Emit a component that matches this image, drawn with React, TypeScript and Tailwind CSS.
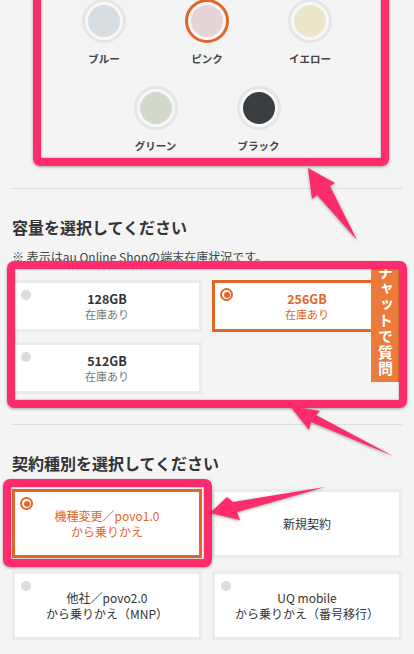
import React from "react";

const colorsRow1 = [
  { name: "ブルー", c: "bg-[#d8dde2]", sel: false },
  { name: "ピンク", c: "bg-[#e8d3d5]", sel: true },
  { name: "イエロー", c: "bg-[#ece6c9]", sel: false },
];
const colorsRow2 = [
  { name: "グリーン", c: "bg-[#d3dacb]", sel: false },
  { name: "ブラック", c: "bg-[#3b3e41]", sel: false },
];

function Swatch({ name, c, sel }: { name: string; c: string; sel: boolean }) {
  return (
    <div className="flex w-[103px] flex-col items-center">
      <div
        className={`h-[44px] w-[44px] rounded-full border-[3px] p-[3px] bg-[#f7f7f7] ${
          sel ? "border-[#e2652a]" : "border-[#e5e5e5]"
        }`}
      >
        <div className={`h-full w-full rounded-full ${c}`} />
      </div>
      <div className="mt-[9px] text-[10.5px] font-bold leading-[14px] text-[#444]">{name}</div>
    </div>
  );
}

function Radio({ sel }: { sel: boolean }) {
  return sel ? (
    <div className="absolute left-[5px] top-[5px] flex h-[13px] w-[13px] items-center justify-center rounded-full border-2 border-[#e2652a] bg-white">
      <div className="h-[6px] w-[6px] rounded-full bg-[#e2652a]" />
    </div>
  ) : (
    <div className="absolute left-[6px] top-[7px] h-[10px] w-[10px] rounded-full bg-[#dcdcdc]" />
  );
}

function CapCard({ gb, sel }: { gb: string; sel: boolean }) {
  return (
    <div
      className={`relative flex h-[52px] flex-col items-center justify-center border-[3px] bg-white ${
        sel ? "border-[#e2652a]" : "border-[#ebebeb]"
      }`}
    >
      <Radio sel={sel} />
      <div className={`text-[12.5px] font-semibold leading-[14px] ${sel ? "text-[#e2652a]" : "text-[#333]"}`}>{gb}</div>
      <div className={`mt-px text-[11px] leading-[14px] ${sel ? "text-[#e2652a]" : "text-[#777]"}`}>在庫あり</div>
    </div>
  );
}

function ContractCard({ lines, sel }: { lines: string[]; sel: boolean }) {
  return (
    <div
      className={`relative flex h-[69px] flex-col items-center justify-center border-[3px] bg-white ${
        sel ? "border-[#e2652a]" : "border-[#ebebeb]"
      }`}
    >
      <Radio sel={sel} />
      {lines.map((l) => (
        <div key={l} className={`text-[12px] font-normal leading-[16px] ${sel ? "text-[#e2652a]" : "text-[#333]"}`}>
          {l}
        </div>
      ))}
    </div>
  );
}

export default function App() {
  return (
    <div className="relative h-[654px] w-[414px] overflow-hidden bg-[#f4f4f4] font-['Noto_Sans_CJK_JP','Noto_Sans',sans-serif]">
      <div className="px-3">
        {/* colors */}
        <div className="-mt-px flex flex-col">
          <div className="flex justify-center">
            {colorsRow1.map((s) => (
              <Swatch key={s.name} {...s} />
            ))}
          </div>
          <div className="mt-[20px] flex justify-center">
            {colorsRow2.map((s) => (
              <Swatch key={s.name} {...s} />
            ))}
          </div>
        </div>
        <div className="mt-[35px] h-px bg-[#dddddd]" />

        <h2 className="mt-[26px] text-[16px] font-bold leading-[24px] text-[#333]">容量を選択してください</h2>
        <p className="mt-[9px] text-[12px] leading-[18px] text-[#444]">※&nbsp;表示はau Online Shopの端末在庫状況です。</p>
        <div className="mt-[14px] grid grid-cols-2 gap-[10px]">
          <CapCard gb="128GB" sel={false} />
          <CapCard gb="256GB" sel={true} />
          <CapCard gb="512GB" sel={false} />
        </div>
        <div className="mt-[30px] h-px bg-[#dddddd]" />

        <h2 className="mt-[26px] text-[16px] font-bold leading-[24px] text-[#333]">契約種別を選択してください</h2>
        <div className="mt-[14px] grid grid-cols-2 gap-x-[10px] gap-y-[13px]">
          <ContractCard lines={["機種変更／povo1.0", "から乗りかえ"]} sel={true} />
          <ContractCard lines={["新規契約"]} sel={false} />
          <ContractCard lines={["他社／povo2.0", "から乗りかえ（MNP）"]} sel={false} />
          <ContractCard lines={["UQ mobile", "から乗りかえ（番号移行）"]} sel={false} />
        </div>
      </div>

      {/* floating chat tab */}
      <div className="absolute left-[371px] top-[263px] flex h-[119px] w-[28px] justify-center bg-[#ec7b3b] pt-[2px]">
        <span className="text-[15px] font-bold leading-[28px] tracking-[1px] text-white [writing-mode:vertical-rl]">
          チャットで質問
        </span>
      </div>

      {/* annotation boxes */}
      <div className="absolute left-[33px] top-[-22px] h-[188px] w-[356px] rounded-[7px] border-[8px] border-[#fe2c6c] shadow-[0_1px_3px_rgba(0,0,0,0.35),inset_0_0_2px_rgba(0,0,0,0.45)]" />
      <div className="absolute left-[7px] top-[261px] h-[147px] w-[400px] rounded-[7px] border-[8px] border-[#fe2c6c] shadow-[0_1px_3px_rgba(0,0,0,0.35),inset_0_0_2px_rgba(0,0,0,0.45)]" />
      <div className="absolute left-[3px] top-[479px] h-[88px] w-[209px] rounded-[7px] border-[8px] border-[#fe2c6c] shadow-[0_1px_3px_rgba(0,0,0,0.35),inset_0_0_2px_rgba(0,0,0,0.45)]" />

      {/* arrows */}
      <svg
        className="pointer-events-none absolute left-0 top-0 drop-shadow-[0_1px_1.5px_rgba(0,0,0,0.35)]"
        width="414"
        height="654"
        viewBox="0 0 414 654"
      >
        <polygon points="308,168 335,183 330,186 357,240 317,195 312,199" fill="#fe2c6c" />
        <polygon points="290,406 320,411 316,415 393,456 311,422 309,430" fill="#fe2c6c" />
        <polygon points="210,513 227,497 233,502 325,487 237,512 240,520" fill="#fe2c6c" />
      </svg>
    </div>
  );
}
